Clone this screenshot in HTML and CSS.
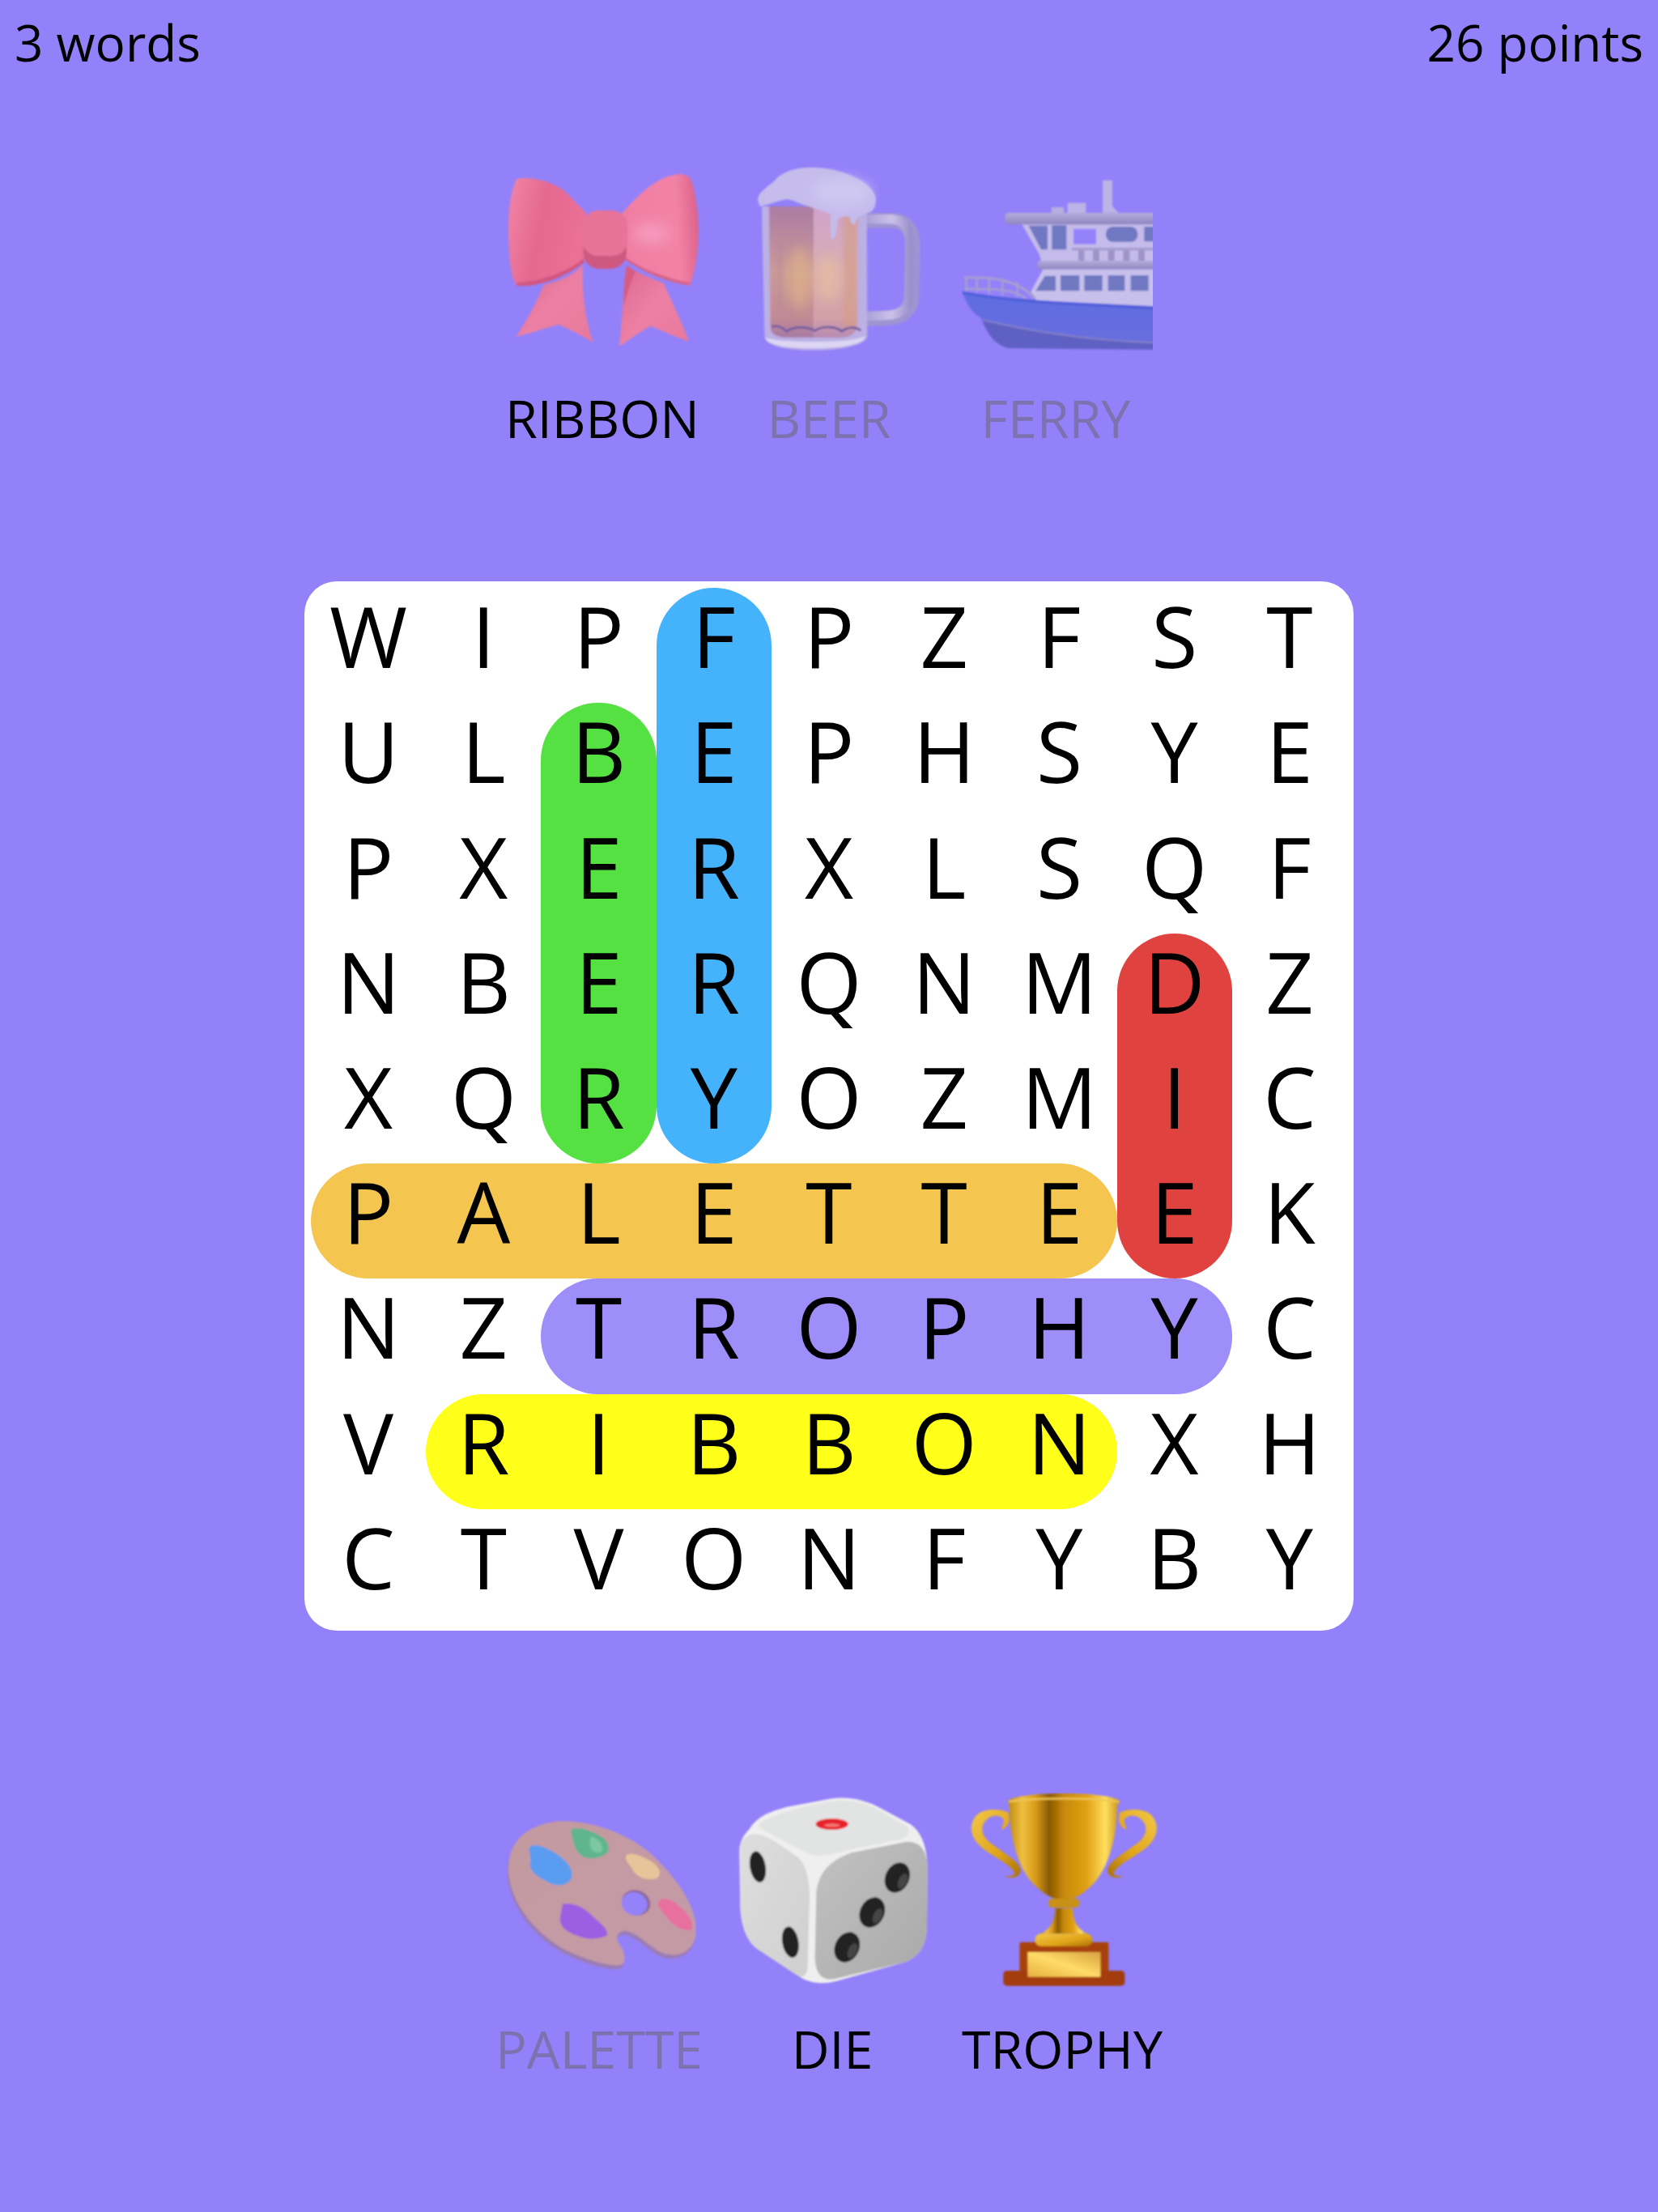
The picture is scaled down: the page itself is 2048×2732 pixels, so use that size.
FILE: index.html
```html
<!DOCTYPE html>
<html lang="en">
<head>
<meta charset="utf-8">
<title>Word search</title>
<link rel="stylesheet" href="styles.css">
</head>
<body>
<svg class="defs" width="0" height="0" aria-hidden="true">
  <defs>
    <filter id="soft" x="-5%" y="-5%" width="110%" height="110%"><feGaussianBlur stdDeviation="2.4"/></filter>
    <filter id="softer" x="-60%" y="-60%" width="220%" height="220%"><feGaussianBlur stdDeviation="22"/></filter>
    <filter id="stripe" x="-60%" y="-10%" width="220%" height="120%"><feGaussianBlur stdDeviation="6"/></filter>
    <linearGradient id="bowL" x1="0" y1="0" x2="1" y2="0.3"><stop offset="0" stop-color="#f285a8"/><stop offset=".5" stop-color="#e4688f"/><stop offset="1" stop-color="#ea7096"/></linearGradient>
    <linearGradient id="bowR" x1="0" y1="0.3" x2="1" y2="0.2"><stop offset="0" stop-color="#f07ea3"/><stop offset=".7" stop-color="#f283a6"/><stop offset="1" stop-color="#dc5f88"/></linearGradient>
    <linearGradient id="bowT" x1="0" y1="0" x2="1" y2="1"><stop offset="0" stop-color="#dc6790"/><stop offset=".5" stop-color="#ec80a4"/><stop offset="1" stop-color="#e8789c"/></linearGradient>
    <linearGradient id="beerL" x1="0" y1="0" x2="0" y2="1"><stop offset="0" stop-color="#ac7ca4"/><stop offset=".5" stop-color="#cb9a98"/><stop offset=".85" stop-color="#c38b94"/><stop offset="1" stop-color="#a87aa4"/></linearGradient>
    <linearGradient id="beerR" x1="0" y1="0" x2="0" y2="1"><stop offset="0" stop-color="#d0a3c9"/><stop offset=".5" stop-color="#d8aeb6"/><stop offset=".85" stop-color="#d4a0a8"/><stop offset="1" stop-color="#b88ab0"/></linearGradient>
    <linearGradient id="handle" x1="0" y1="0" x2="1" y2="0"><stop offset="0" stop-color="#a99ed8"/><stop offset=".6" stop-color="#cbc2ea"/><stop offset="1" stop-color="#9c90cc"/></linearGradient>
    <linearGradient id="cup" x1="0" y1="0" x2="1" y2="0"><stop offset="0" stop-color="#c08a10"/><stop offset=".13" stop-color="#f0c040"/><stop offset=".25" stop-color="#d89a18"/><stop offset=".37" stop-color="#8a5a05"/><stop offset=".5" stop-color="#c88a08"/><stop offset=".7" stop-color="#e0a015"/><stop offset=".87" stop-color="#ffe060"/><stop offset="1" stop-color="#c89018"/></linearGradient>
    <linearGradient id="plate" x1="0" y1="1" x2="1" y2="0"><stop offset="0" stop-color="#e8b040"/><stop offset=".5" stop-color="#ffdc68"/><stop offset="1" stop-color="#d8a040"/></linearGradient>
    <linearGradient id="gold" x1="0" y1="0" x2="1" y2="1"><stop offset="0" stop-color="#f4c848"/><stop offset=".6" stop-color="#e0a418"/><stop offset="1" stop-color="#a87208"/></linearGradient>
    <linearGradient id="dieL" x1="0" y1="0" x2="1" y2="1"><stop offset="0" stop-color="#dedede"/><stop offset="1" stop-color="#cfcfcf"/></linearGradient>
    <linearGradient id="dieR" x1="0" y1="0" x2="1" y2="1"><stop offset="0" stop-color="#c2c2c2"/><stop offset="1" stop-color="#a9a9a9"/></linearGradient>
    <linearGradient id="wood" x1="0" y1="0" x2="1" y2="1"><stop offset="0" stop-color="#c49aa0"/><stop offset="1" stop-color="#c49aa8"/></linearGradient>
    <linearGradient id="roof" x1="0" y1="0" x2="0" y2="1"><stop offset="0" stop-color="#b6acdc"/><stop offset="1" stop-color="#8f86c0"/></linearGradient>
    <linearGradient id="hull" x1="0" y1="0" x2="0" y2="1"><stop offset="0" stop-color="#5f6de2"/><stop offset="1" stop-color="#6a6edc"/></linearGradient>
  </defs>
</svg>

<header class="hud">
  <span>3 words</span>
  <span>26 points</span>
</header>

<section class="tray tray-top">
  <figure class="word">
    <svg class="emoji" viewBox="12 0 720 720" role="img" aria-label="Ribbon">
      <g filter="url(#soft)">
        <path fill="url(#bowT)" d="M300 380C295 480 310 590 338 668 290 640 250 620 210 602 150 620 100 635 52 648 90 590 130 520 155 455 220 440 270 415 300 380Z"/>
        <path fill="url(#bowT)" d="M460 385C450 480 445 590 435 683 470 660 510 630 552 608 600 630 650 650 693 665 670 600 630 520 600 450 550 430 500 410 460 385Z"/>
        <path fill="#d65c84" d="M462 385C452 440 450 490 452 530 468 480 478 440 495 405Z"/>
        <path fill="url(#bowL)" d="M55 62C110 55 190 70 240 115L312 190 305 370C240 425 130 465 55 458 40 440 30 400 25 300 20 200 30 110 55 62Z"/>
        <path fill="url(#bowR)" d="M445 190C500 130 570 50 660 45 700 45 705 70 715 120 735 220 735 350 697 458 620 445 520 405 450 355Z"/>
        <ellipse cx="555" cy="265" rx="70" ry="40" fill="#f59abb" filter="url(#softer)"/>
        <path fill="#d2577f" d="M55 447C130 447 240 410 302 358L305 372C240 425 130 468 55 458Z"/>
        <path fill="#d9648a" d="M697 447C620 432 520 400 455 350L450 358C520 410 620 448 697 458Z"/>
        <rect x="302" y="180" width="160" height="216" rx="60" fill="#cf5980"/>
        <rect x="298" y="180" width="168" height="168" rx="58" fill="#e87398"/>
      </g>
    </svg>
    <figcaption class="label">RIBBON</figcaption>
  </figure>
  <figure class="word">
    <svg class="emoji" viewBox="12 0 720 720" role="img" aria-label="Beer">
      <g filter="url(#soft)">
        <path fill="none" stroke="#9f94d2" stroke-width="56" d="M505 217H600C660 217 682 255 682 310L678 500C676 550 640 575 590 578L505 582"/>
        <path fill="none" stroke="url(#handle)" stroke-width="34" d="M505 212H600C655 212 672 255 672 310L668 500C666 545 635 565 590 568L505 572"/>
        <path fill="#bcb0e4" d="M122 165H512L514 645C514 672 440 697 322 698 200 698 135 680 133 645Z"/>
        <path fill="#dcd6f4" d="M135 650C180 670 450 675 505 645 510 670 440 690 322 690 220 690 140 680 135 650Z"/>
        <path fill="url(#beerL)" d="M150 165H315V650H200C170 645 155 635 155 610Z"/>
        <path fill="url(#beerR)" d="M315 165H480L475 610C475 635 450 648 420 650H315Z"/>
        <g filter="url(#stripe)">
          <path fill="#b98a9c" d="M185 280h18v300h-18zM225 290h14v280h-14z" opacity=".7"/>
          <path fill="#d49c88" d="M425 200h50v410h-50z" opacity=".65"/>
        </g>
        <ellipse cx="262" cy="430" rx="50" ry="110" fill="#dcae8a" opacity=".8" filter="url(#softer)"/>
        <ellipse cx="370" cy="430" rx="42" ry="90" fill="#e6bba0" opacity=".8" filter="url(#softer)"/>
        <path fill="none" stroke="#715ba0" stroke-width="8" d="M160 610C180 605 200 612 215 628 245 605 295 612 320 625 350 605 400 610 420 628 440 610 470 610 490 625"/>
        <path fill="#c5bcec" d="M108 140C110 110 150 90 170 70 200 30 270 15 340 22 420 28 530 70 545 130 550 170 530 190 510 190 495 200 475 198 470 225 462 240 452 230 450 205 430 195 415 205 405 210 400 240 400 280 385 288 375 285 378 220 378 195 350 180 310 170 280 160 250 150 230 135 205 140 180 145 140 160 115 165Z"/>
        <ellipse cx="420" cy="110" rx="110" ry="50" fill="#d2cbf3" opacity=".8" filter="url(#softer)"/>
      </g>
    </svg>
    <figcaption class="label dim">BEER</figcaption>
  </figure>
  <figure class="word">
    <svg class="emoji" viewBox="12 0 720 720" role="img" aria-label="Ferry">
      <g filter="url(#soft)">
        <path fill="#bdb3e6" d="M546 68H582V165L605 188H546Z"/>
        <rect x="356" y="168" width="46" height="24" fill="#b8aee0"/>
        <rect x="416" y="152" width="68" height="40" fill="#bdb3e6"/>
        <path fill="#c4bbea" d="M245 228H740V372H320L310 340Z"/>
        <rect x="184" y="188" width="560" height="44" rx="14" fill="url(#roof)"/>
        <path fill="#6f78c2" d="M272 236H342V325H318ZM358 235H412V325H358ZM700 240H740V295H700Z"/>
        <rect x="558" y="240" width="118" height="56" rx="26" fill="#6f78c2"/>
        <rect x="438" y="248" width="84" height="57" fill="#9482fa"/>
        <path fill="#a59bd0" d="M432 318H740V328H432Z"/>
        <path fill="#9d93c8" d="M456 328h22v40h-22zM510 328h24v40h-24zM566 328h24v40h-24zM622 328h24v40h-24zM678 328h24v40h-24z"/>
        <rect x="305" y="366" width="440" height="32" rx="12" fill="url(#roof)"/>
        <path fill="#c8c0ec" d="M325 398H740V535L300 512 280 480Z"/>
        <path fill="#6f78c2" d="M298 478L332 422H372V478ZM390 420H460V478H390ZM478 420H545V478H478ZM566 420H628V478H566ZM650 420H716V478H650Z"/>
        <path fill="none" stroke="#a69dd0" stroke-width="10" d="M32 428C130 428 225 430 295 505"/>
        <path fill="none" stroke="#a69dd0" stroke-width="8" d="M40 470C120 472 210 465 262 505M40 428V480M80 430V482M125 432V488M175 434V492M230 445V500"/>
        <path fill="url(#hull)" d="M25 480C120 500 250 510 400 520L740 535V695L200 690C150 680 120 640 95 578 60 560 40 520 25 480Z"/>
        <path fill="#5f60c4" d="M100 585C250 620 450 660 740 670V695L200 690C150 680 120 640 100 585Z"/>
        <path fill="none" stroke="#8c86c4" stroke-width="5" d="M100 585C250 620 450 660 740 670"/>
        <path fill="none" stroke="#4e5ed8" stroke-width="10" d="M28 484C120 504 250 514 400 524L740 542"/>
      </g>
    </svg>
    <figcaption class="label dim">FERRY</figcaption>
  </figure>
</section>

<main class="board">
  <div class="pills">
    <i class="pill p-ferry"></i>
    <i class="pill p-beer"></i>
    <i class="pill p-palette"></i>
    <i class="pill p-die"></i>
    <i class="pill p-trophy"></i>
    <i class="pill p-ribbon"></i>
  </div>
  <div class="letters">
    <span>W</span><span>I</span><span>P</span><span>F</span><span>P</span><span>Z</span><span>F</span><span>S</span><span>T</span>
    <span>U</span><span>L</span><span>B</span><span>E</span><span>P</span><span>H</span><span>S</span><span>Y</span><span>E</span>
    <span>P</span><span>X</span><span>E</span><span>R</span><span>X</span><span>L</span><span>S</span><span>Q</span><span>F</span>
    <span>N</span><span>B</span><span>E</span><span>R</span><span>Q</span><span>N</span><span>M</span><span>D</span><span>Z</span>
    <span>X</span><span>Q</span><span>R</span><span>Y</span><span>O</span><span>Z</span><span>M</span><span>I</span><span>C</span>
    <span>P</span><span>A</span><span>L</span><span>E</span><span>T</span><span>T</span><span>E</span><span>E</span><span>K</span>
    <span>N</span><span>Z</span><span>T</span><span>R</span><span>O</span><span>P</span><span>H</span><span>Y</span><span>C</span>
    <span>V</span><span>R</span><span>I</span><span>B</span><span>B</span><span>O</span><span>N</span><span>X</span><span>H</span>
    <span>C</span><span>T</span><span>V</span><span>O</span><span>N</span><span>F</span><span>Y</span><span>B</span><span>Y</span>
  </div>
</main>

<section class="tray tray-bottom">
  <figure class="word">
    <svg class="emoji" viewBox="15 12 720 720" role="img" aria-label="Palette">
      <g filter="url(#soft)">
        <path fill="#9a7db4" transform="translate(-4 14)" d="M230 118C340 115 490 160 590 260 680 350 740 450 735 530 730 590 680 625 620 610 570 595 530 540 480 525 450 520 435 540 445 565 470 600 475 625 465 645 440 665 350 640 260 600 170 555 90 470 60 390 30 320 30 240 75 185 110 145 170 122 230 118Z"/>
        <path fill="url(#wood)" d="M230 118C340 115 490 160 590 260 680 350 740 450 735 530 730 590 680 625 620 610 570 595 530 540 480 525 450 520 435 540 445 565 470 600 475 625 465 645 440 665 350 640 260 600 170 555 90 470 60 390 30 320 30 240 75 185 110 145 170 122 230 118Z"/>
        <ellipse cx="512" cy="420" rx="54" ry="46" transform="rotate(20 512 420)" fill="#8d6a9c"/>
        <ellipse cx="506" cy="424" rx="48" ry="42" transform="rotate(20 506 424)" fill="#9482fa"/>
        <path fill="#5fb58e" d="M270 150C290 135 340 150 375 170 405 185 420 215 405 235 385 255 340 265 310 245 280 225 280 190 270 150Z"/>
        <path fill="#7cc8a0" d="M345 175C370 180 395 205 385 232 365 240 345 230 340 205Z"/>
        <path fill="#5a9cf0" d="M115 220C125 195 170 210 210 235 250 260 285 295 272 330 250 365 210 360 170 335 130 315 110 290 122 262Z"/>
        <path fill="#e8c49a" d="M475 245C495 230 525 245 560 262 600 285 610 315 590 330 550 340 510 325 495 290 485 275 470 265 475 245Z"/>
        <path fill="#e8709e" d="M595 415C615 395 650 410 680 440 710 465 730 500 715 522 680 525 640 500 620 465 600 445 590 430 595 415Z"/>
        <path fill="#9a5ee2" d="M240 425C270 420 310 430 340 460 370 490 410 515 405 540 380 555 330 560 290 540 250 525 225 505 232 470Z"/>
      </g>
    </svg>
    <figcaption class="label dim">PALETTE</figcaption>
  </figure>
  <figure class="word">
    <svg class="emoji" viewBox="9 12 720 720" role="img" aria-label="Die">
      <g filter="url(#soft)">
        <path fill="#efefef" d="M60 150C90 100 130 85 200 65L360 35C420 25 480 35 540 65L660 130C700 160 720 210 722 290L720 500C720 580 690 620 640 640L380 712C330 725 280 715 250 695L90 590C50 560 30 500 28 430L25 230C25 195 40 170 60 150Z"/>
        <path fill="#e2e4e4" d="M100 125C150 90 280 55 380 42 440 35 500 55 540 75L650 140C660 170 640 185 600 190L430 225C380 240 340 250 300 245 250 230 190 190 130 160 100 145 90 135 100 125Z"/>
        <path fill="url(#dieL)" d="M30 200C60 150 100 160 160 195L240 250C270 275 285 330 285 400L278 650C278 690 260 700 240 690L90 590C50 560 30 500 28 430Z"/>
        <path fill="url(#dieR)" d="M310 380C320 300 370 260 440 235L640 195C690 190 720 220 722 290L720 500C720 580 690 620 640 640L380 702C330 712 305 680 305 620Z"/>
        <ellipse cx="368" cy="129" rx="60" ry="21" fill="#e8232a"/>
        <ellipse cx="368" cy="133" rx="30" ry="6" fill="#f27a78"/>
        <ellipse cx="93" cy="287" rx="29" ry="58" transform="rotate(-10 93 287)" fill="#202020"/>
        <ellipse cx="214" cy="566" rx="30" ry="58" transform="rotate(-10 214 566)" fill="#202020"/>
        <ellipse cx="610" cy="327" rx="44" ry="58" transform="rotate(25 610 327)" fill="#202020"/>
        <ellipse cx="517" cy="456" rx="45" ry="58" transform="rotate(25 517 456)" fill="#202020"/>
        <ellipse cx="424" cy="585" rx="45" ry="58" transform="rotate(25 424 585)" fill="#202020"/>
        <ellipse cx="630" cy="340" rx="16" ry="30" transform="rotate(25 630 340)" fill="#444"/>
        <ellipse cx="537" cy="469" rx="16" ry="30" transform="rotate(25 537 469)" fill="#444"/>
        <ellipse cx="444" cy="598" rx="16" ry="30" transform="rotate(25 444 598)" fill="#444"/>
      </g>
    </svg>
    <figcaption class="label">DIE</figcaption>
  </figure>
  <figure class="word">
    <svg class="emoji" viewBox="6 12 720 720" role="img" aria-label="Trophy">
      <g filter="url(#soft)">
        <path id="cup-handle" fill="url(#gold)" d="M165 85C130 70 70 70 45 100 15 140 30 190 80 225 130 260 175 280 190 310 185 325 170 320 155 322 180 335 215 325 212 295 200 260 130 225 90 190 60 160 65 125 95 105 120 90 150 100 150 120L140 150C170 140 175 110 165 85Z"/>
        <use href="#cup-handle" transform="translate(746 0) scale(-1 1)"/>
        <rect x="208" y="566" width="330" height="140" rx="8" fill="#a8430c"/>
        <rect x="148" y="672" width="450" height="56" rx="14" fill="#a33e0a"/>
        <rect x="238" y="603" width="270" height="92" fill="url(#plate)"/>
        <path fill="url(#cup)" d="M340 440C340 490 320 520 285 535H460C425 520 405 490 405 440Z"/>
        <rect x="265" y="535" width="213" height="46" rx="22" fill="url(#gold)"/>
        <rect x="315" y="405" width="115" height="33" rx="14" fill="#c89018"/>
        <path fill="url(#cup)" d="M165 45C165 30 250 15 370 15 490 15 580 30 580 45L570 60C570 170 540 280 490 340 460 375 430 395 405 405H340C310 395 280 375 250 340 200 280 170 170 170 60Z"/>
        <path fill="none" stroke="#f0c858" stroke-width="7" d="M168 46C250 30 490 30 578 46"/>
      </g>
    </svg>
    <figcaption class="label">TROPHY</figcaption>
  </figure>
</section>
</body>
</html>
```
FILE: styles.css
```css
* { box-sizing: border-box; }
html, body { margin: 0; }
body {
  height: 2732px;
  background: #9381fa;
  color: #000;
  font-family: "Open Sans", "Noto Sans", sans-serif;
  overflow: hidden;
}
.defs { position: absolute; }
.hud {
  display: flex;
  justify-content: space-between;
  padding: 8px 18px 0;
  height: 200px;
  font-size: 62px;
  line-height: 88px;
}
.tray { display: flex; justify-content: center; gap: 40px; }
.word { margin: 0; display: flex; flex-direction: column; align-items: center; }
.emoji { display: block; width: 240px; height: 240px; }
.label { margin-top: 32px; font-size: 64.5px; line-height: 88px; white-space: nowrap; }
.dim { color: #7c72b0; }
.tray-top { height: 518px; }
.board {
  position: relative;
  width: 1296px;
  height: 1296px;
  margin: 0 0 200px 376px;
  padding: 8px;
  background: #fff;
  border-radius: 40px;
}
.pills, .letters {
  position: absolute;
  inset: 8px;
  display: grid;
  grid-template-columns: repeat(9, 1fr);
  grid-template-rows: repeat(9, 1fr);
}
.pill { display: block; border-radius: 71px; }
.p-ferry   { grid-column: 4; grid-row: 1 / 6; background: #45b3fc; }
.p-beer    { grid-column: 3; grid-row: 2 / 6; background: #54e141; }
.p-palette { grid-column: 1 / 8; grid-row: 6; background: #f4c64f; }
.p-die     { grid-column: 8; grid-row: 4 / 7; background: #e0433f; }
.p-trophy  { grid-column: 3 / 9; grid-row: 7; background: #9e8efa; }
.p-ribbon  { grid-column: 2 / 8; grid-row: 8; background: #ffff19; }
.letters span {
  display: flex;
  align-items: center;
  justify-content: center;
  padding-bottom: 24px;
  font-size: 104px;
  line-height: 1;
}
```
